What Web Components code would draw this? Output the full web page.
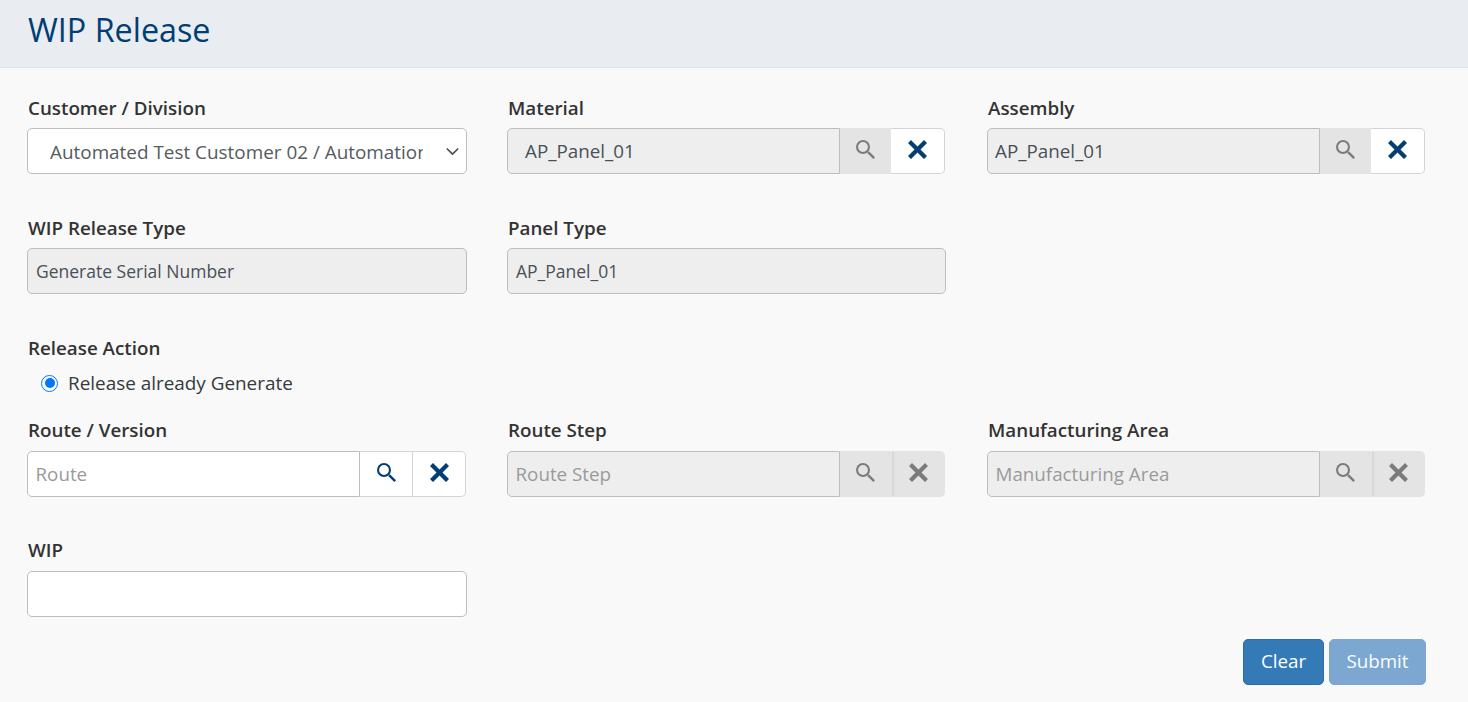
<!DOCTYPE html>
<html lang="en">
<head>
<meta charset="utf-8">
<title>WIP Release</title>
<style>
  html, body { margin: 0; background: #f9f9f9; }
  body { font-family: "Open Sans", "Liberation Sans", sans-serif; color: #212529; }
</style>
</head>
<body>
<wip-release-page></wip-release-page>
<script>
const SEARCH_PATH = 'M7 0a7 7 0 1 0 0 14A7 7 0 0 0 7 0zm0 2.1a4.9 4.9 0 1 1 0 9.8 4.9 4.9 0 0 1 0-9.8zM11.2 12.9l1.7-1.7 6.1 6.1-1.7 1.7z';
const CLOSE_PATH = 'M3 0 9.5 6.5 16 0 19 3 12.5 9.5 19 16 16 19 9.5 12.5 3 19 0 16 6.5 9.5 0 3z';

class PageHeader extends HTMLElement {
  constructor() {
    super();
    this.attachShadow({ mode: 'open' });
    this.shadowRoot.innerHTML = `
      <style>
        :host { display: block; background: #e9ecf1; border-bottom: 1px solid #dfe2e8; height: 67px; }
        h1 { margin: 0; padding: 7px 0 0 28px; font-size: 32.3px; line-height: 44px; font-weight: 400; color: #003e73; }
      </style>
      <h1><slot></slot></h1>
    `;
  }
}
customElements.define('page-header', PageHeader);

class FormField extends HTMLElement {
  constructor() {
    super();
    this.attachShadow({ mode: 'open' });
    const label = this.getAttribute('label') || '';
    this.shadowRoot.innerHTML = `
      <style>
        :host { display: flex; flex-direction: column; min-width: 0; }
        label { font-size: 18.8px; line-height: 24px; font-weight: 600; color: #333; height: 24px; padding-left: 1px; margin-bottom: var(--label-gap, 8px); }
      </style>
      <label>${label}</label>
      <slot></slot>
    `;
  }
}
customElements.define('form-field', FormField);

class TextBox extends HTMLElement {
  constructor() {
    super();
    this.attachShadow({ mode: 'open' });
    const value = this.getAttribute('value') || '';
    const placeholder = this.getAttribute('placeholder') || '';
    this.shadowRoot.innerHTML = `
      <style>
        :host { display: block; height: 46px; box-sizing: border-box; border: 1px solid #bdbdbd; border-radius: 5px;
          background: #fff; font-size: 17.5px; line-height: 44px; padding: 0 8px; color: #495057; white-space: nowrap; overflow: hidden; }
        :host([disabled]) { background: #eee; }
        .ph { color: #9a9a9a; }
      </style>
      ${value ? `<span>${value}</span>` : `<span class="ph">${placeholder}</span>`}
    `;
  }
}
customElements.define('text-box', TextBox);

class SelectBox extends HTMLElement {
  constructor() {
    super();
    this.attachShadow({ mode: 'open' });
    this.shadowRoot.innerHTML = `
      <style>
        :host { display: flex; align-items: center; height: 46px; box-sizing: border-box; border: 1px solid #bdbdbd; border-radius: 5px;
          background: #fff; font-size: 18.9px; color: #555b61; padding: 0 7px 0 22px; }
        .value { flex: 1; min-width: 0; overflow: hidden; white-space: nowrap; line-height: 46px; margin-top: 2px; margin-right: 23px; }
        svg { flex: none; width: 13px; height: 13px; }
      </style>
      <div class="value">Automated Test Customer 02 / Automation</div>
      <svg viewBox="0 0 13 13"><path d="M1.3 4 6.5 9.2 11.7 4" fill="none" stroke="#4a4f55" stroke-width="1.7" stroke-linecap="round" stroke-linejoin="round"/></svg>
    `;
  }
}
customElements.define('select-box', SelectBox);

class LookupBox extends HTMLElement {
  constructor() {
    super();
    this.attachShadow({ mode: 'open' });
    const value = this.getAttribute('value') || '';
    const placeholder = this.getAttribute('placeholder') || '';
    const indent = this.getAttribute('indent') || '7.5';
    this.shadowRoot.innerHTML = `
      <style>
        :host { display: flex; height: 46px; box-sizing: border-box; font-size: 18.8px; color: #495057; }
        .input { flex: none; width: 333px; box-sizing: border-box; border: 1px solid #bdbdbd; border-radius: 5px 0 0 5px;
          line-height: 44px; padding-left: ${indent}px; background: #fff; white-space: nowrap; overflow: hidden; }
        :host([input-disabled]) .input { background: #eee; }
        .ph { color: #9a9a9a; }
        .btn { flex: none; width: 53px; box-sizing: border-box; display: flex; align-items: center; justify-content: center;
          padding-bottom: 4px; background: #fff; border: 1px solid #d4d4d4; border-left: 0; }
        .btn.off { width: 52px; background: #e4e4e4; border-color: #e4e4e4; }
        :host([search-off]:not([clear-off])) .btn.off { width: 51px; }
        .btn.end { flex: 1; width: auto; border-radius: 0 5px 5px 0; }
        .btn.end.off { border-left: 2px solid #d8d8d8; padding-right: 2px; }
        svg { width: 19px; height: 19px; fill: #003e73; }
        .off svg { fill: #7b7b7b; }
      </style>
      <div class="input">${value ? `<span>${value}</span>` : `<span class="ph">${placeholder}</span>`}</div>
      <div class="btn${this.hasAttribute('search-off') ? ' off' : ''}"><svg viewBox="0 0 19 19"><path d="${SEARCH_PATH}"/></svg></div>
      <div class="btn end${this.hasAttribute('clear-off') ? ' off' : ''}"><svg viewBox="0 0 19 19"><path d="${CLOSE_PATH}"/></svg></div>
    `;
  }
}
customElements.define('lookup-box', LookupBox);

class RadioOption extends HTMLElement {
  constructor() {
    super();
    this.attachShadow({ mode: 'open' });
    this.shadowRoot.innerHTML = `
      <style>
        :host { display: flex; align-items: center; gap: 10px; padding-left: 14px; font-size: 18.9px; line-height: 24px; color: #343a40; }
        .dot { width: 17px; height: 17px; box-sizing: border-box; border-radius: 50%; border: 1px solid #0075ff; background: #fff; padding: 2.5px; }
        .dot::after { content: ""; display: block; width: 10px; height: 10px; border-radius: 50%; background: #0075ff; }
      </style>
      <span class="dot"></span><span><slot></slot></span>
    `;
  }
}
customElements.define('radio-option', RadioOption);

class ActionButton extends HTMLElement {
  constructor() {
    super();
    this.attachShadow({ mode: 'open' });
    this.shadowRoot.innerHTML = `
      <style>
        :host { display: block; height: 46px; box-sizing: border-box; border: 1px solid #2e6da4; border-radius: 5px; text-align: center;
          background: #337ab7; color: #fff; font-size: 18.8px; line-height: 42px; }
        :host([disabled]) { background: #7ba7d0; border-color: #7ba7d0; color: #fbfdff; }
      </style>
      <slot></slot>
    `;
  }
}
customElements.define('action-button', ActionButton);

class WipReleasePage extends HTMLElement {
  constructor() {
    super();
    this.attachShadow({ mode: 'open' });
    this.shadowRoot.innerHTML = `
      <style>
        :host { display: block; }
        main { padding: 28px 42px 0 27px; }
        .row { display: grid; grid-template-columns: 440px 438px 438px; column-gap: 40px; margin-bottom: 42px; }
        .row > :nth-child(3) { margin-left: 2px; margin-right: -2px; }
        .action { height: 82px; --label-gap: 11px; }
        .route { --label-gap: 9px; margin-bottom: 41px; }
        .actions { display: flex; justify-content: flex-end; gap: 5px; margin-top: -19px; }
        #clear { width: 81px; }
        #submit { width: 97px; }
        .wide { margin-right: -1px; }
      </style>
      <page-header>WIP Release</page-header>
      <main>
        <div class="row">
          <form-field label="Customer / Division"><select-box></select-box></form-field>
          <form-field label="Material"><lookup-box value="AP_Panel_01" indent="17" input-disabled search-off></lookup-box></form-field>
          <form-field label="Assembly"><lookup-box value="AP_Panel_01" indent="7" input-disabled search-off></lookup-box></form-field>
        </div>
        <div class="row">
          <form-field label="WIP Release Type"><text-box value="Generate Serial Number" disabled></text-box></form-field>
          <form-field label="Panel Type" class="wide"><text-box value="AP_Panel_01" disabled></text-box></form-field>
        </div>
        <div class="action">
          <form-field label="Release Action"><radio-option>Release already Generate</radio-option></form-field>
        </div>
        <div class="row route">
          <form-field label="Route / Version"><lookup-box placeholder="Route" style="margin-right:1px"></lookup-box></form-field>
          <form-field label="Route Step"><lookup-box placeholder="Route Step" input-disabled search-off clear-off></lookup-box></form-field>
          <form-field label="Manufacturing Area"><lookup-box placeholder="Manufacturing Area" input-disabled search-off clear-off></lookup-box></form-field>
        </div>
        <div class="row route">
          <form-field label="WIP"><text-box></text-box></form-field>
        </div>
        <div class="actions">
          <action-button id="clear">Clear</action-button>
          <action-button id="submit" disabled>Submit</action-button>
        </div>
      </main>
    `;
  }
}
customElements.define('wip-release-page', WipReleasePage);
</script>
</body>
</html>
